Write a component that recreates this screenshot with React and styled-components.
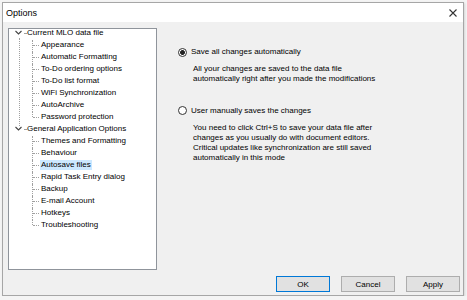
import React from 'react';
import styled, { createGlobalStyle } from 'styled-components';

const GlobalStyle = createGlobalStyle`
    html, body {
        margin: 0;
        padding: 0;
        background: #f4f4f4;
    }
    body {
        font-family: "Liberation Sans", Arial, sans-serif;
        color: #000;
    }
`;

const Window = styled.div`
    margin: 2px 0 0 2px;
    width: 462px;
    height: 294px;
    box-sizing: border-box;
    border: 1px solid #a6a6a6;
    background: #f0f0f0;
    display: flex;
    flex-direction: column;
    box-shadow: 1px 1px 2px rgba(0, 0, 0, 0.12);
`;

const TitleBar = styled.div`
    flex: none;
    height: 19px;
    background: #fff;
    display: flex;
    align-items: center;
    justify-content: space-between;
    padding: 0 6px 0 3px;
    font-size: 9px;
`;

const Body = styled.div`
    flex: 1;
    display: flex;
    flex-direction: column;
    padding: 6px 3px 3px 5px;
`;

const Main = styled.div`
    display: flex;
    height: 242px;
`;

const Tree = styled.div`
    flex: none;
    width: 149px;
    height: 242px;
    box-sizing: border-box;
    border: 1px solid #8f949b;
    background: #fff;
    overflow: hidden;
    font-size: 8px;
`;

const TreeList = styled.div`
    margin-top: -1px;
`;

const Group = styled.div`
    position: relative;
    // root connector down to the next group
    ${p => !p.$last && `
    &::before {
        content: "";
        position: absolute;
        left: 10px;
        top: 10px;
        bottom: -2px;
        border-left: 1px dotted #a0a0a0;
    }
    `}
`;

const RootRow = styled.div`
    display: flex;
    align-items: flex-start;
    height: 12px;
    padding-left: 6px;
`;

const Dots = styled.span`
    width: 2px;
    margin: 5px 0 0 2px;
    border-top: 1px dotted #a0a0a0;
`;

const ChildRow = styled.div`
    position: relative;
    display: flex;
    align-items: flex-start;
    height: 12px;
    padding-left: 31px;
    &::before {
        content: "";
        position: absolute;
        left: 23px;
        top: 0;
        bottom: ${p => (p.$last ? '7px' : '0')};
        border-left: 1px dotted #a0a0a0;
    }
    &::after {
        content: "";
        position: absolute;
        left: 24px;
        width: 6px;
        top: 5px;
        border-top: 1px dotted #a0a0a0;
    }
`;

const Label = styled.span`
    display: inline-block;
    line-height: 10px;
    height: 10px;
    padding: 0 1px;
    white-space: nowrap;
    background: ${p => (p.$selected ? '#cce8ff' : 'transparent')};
`;

const Panel = styled.div`
    flex: 1;
    padding: 19px 0 0 21px;
    font-size: 8px;
`;

const Option = styled.div`
    margin-bottom: ${p => (p.$gap ? '21px' : '0')};
`;

const RadioRow = styled.div`
    display: flex;
    align-items: center;
    height: 10px;
    line-height: 10px;
    gap: 4px;
`;

const Radio = styled.span`
    flex: none;
    width: 9px;
    height: 9px;
    box-sizing: border-box;
    border-radius: 50%;
    border: 1px solid #333;
    background: ${p => (p.$checked
        ? 'radial-gradient(circle, #222 2.1px, #fff 2.7px)'
        : '#fff')};
`;

const Desc = styled.div`
    margin: 7px 0 0 15px;
    line-height: 10.3px;
`;

const Footer = styled.div`
    display: flex;
    justify-content: flex-end;
    gap: 11px;
    margin-top: 6px;
`;

const Button = styled.button`
    width: 54px;
    height: 16px;
    padding: 0;
    box-sizing: border-box;
    border: 1px solid ${p => (p.$default ? '#0078d7' : '#adadad')};
    background: #e1e1e1;
    font-family: "Liberation Sans", Arial, sans-serif;
    font-size: 8px;
    color: #000;
`;

const Chevron = () => (
    <svg width="7" height="10" viewBox="0 0 7 10">
        <path d="M0.5 3 L3.5 6 L6.5 3" fill="none" stroke="#444" strokeWidth="1.1" />
    </svg>
);

const CloseIcon = () => (
    <svg width="8" height="8" viewBox="0 0 8 8">
        <path d="M0.5 0.5 L7.5 7.5 M7.5 0.5 L0.5 7.5" stroke="#333" strokeWidth="1.1" />
    </svg>
);

const groups = [
    {
        title: 'Current MLO data file',
        items: ['Appearance', 'Automatic Formatting', 'To-Do ordering options', 'To-Do list format',
            'WiFi Synchronization', 'AutoArchive', 'Password protection'],
    },
    {
        title: 'General Application Options',
        items: ['Themes and Formatting', 'Behaviour', 'Autosave files', 'Rapid Task Entry dialog',
            'Backup', 'E-mail Account', 'Hotkeys', 'Troubleshooting'],
    },
];

const App = () => {
    return <>
        <GlobalStyle />
        <Window>
            <TitleBar>
                <span>Options</span>
                <CloseIcon />
            </TitleBar>
            <Body>
                <Main>
                    <Tree>
                        <TreeList>
                            {groups.map((g, gi) => (
                                <Group key={g.title} $last={gi === groups.length - 1}>
                                    <RootRow>
                                        <Chevron />
                                        <Dots />
                                        <Label>{g.title}</Label>
                                    </RootRow>
                                    {g.items.map((item, i) => (
                                        <ChildRow key={item} $last={i === g.items.length - 1}>
                                            <Label $selected={item === 'Autosave files'}>{item}</Label>
                                        </ChildRow>
                                    ))}
                                </Group>
                            ))}
                        </TreeList>
                    </Tree>
                    <Panel>
                        <Option $gap>
                            <RadioRow>
                                <Radio $checked />
                                <span>Save all changes automatically</span>
                            </RadioRow>
                            <Desc>
                                All your changes are saved to the data file<br />
                                automatically right after you made the modifications
                            </Desc>
                        </Option>
                        <Option>
                            <RadioRow>
                                <Radio />
                                <span>User manually saves the changes</span>
                            </RadioRow>
                            <Desc>
                                You need to click Ctrl+S to save your data file after<br />
                                changes as you usually do with document editors.<br />
                                Critical updates like synchronization are still saved<br />
                                automatically in this mode
                            </Desc>
                        </Option>
                    </Panel>
                </Main>
                <Footer>
                    <Button $default>OK</Button>
                    <Button>Cancel</Button>
                    <Button>Apply</Button>
                </Footer>
            </Body>
        </Window>
    </>;
};

export default App;
